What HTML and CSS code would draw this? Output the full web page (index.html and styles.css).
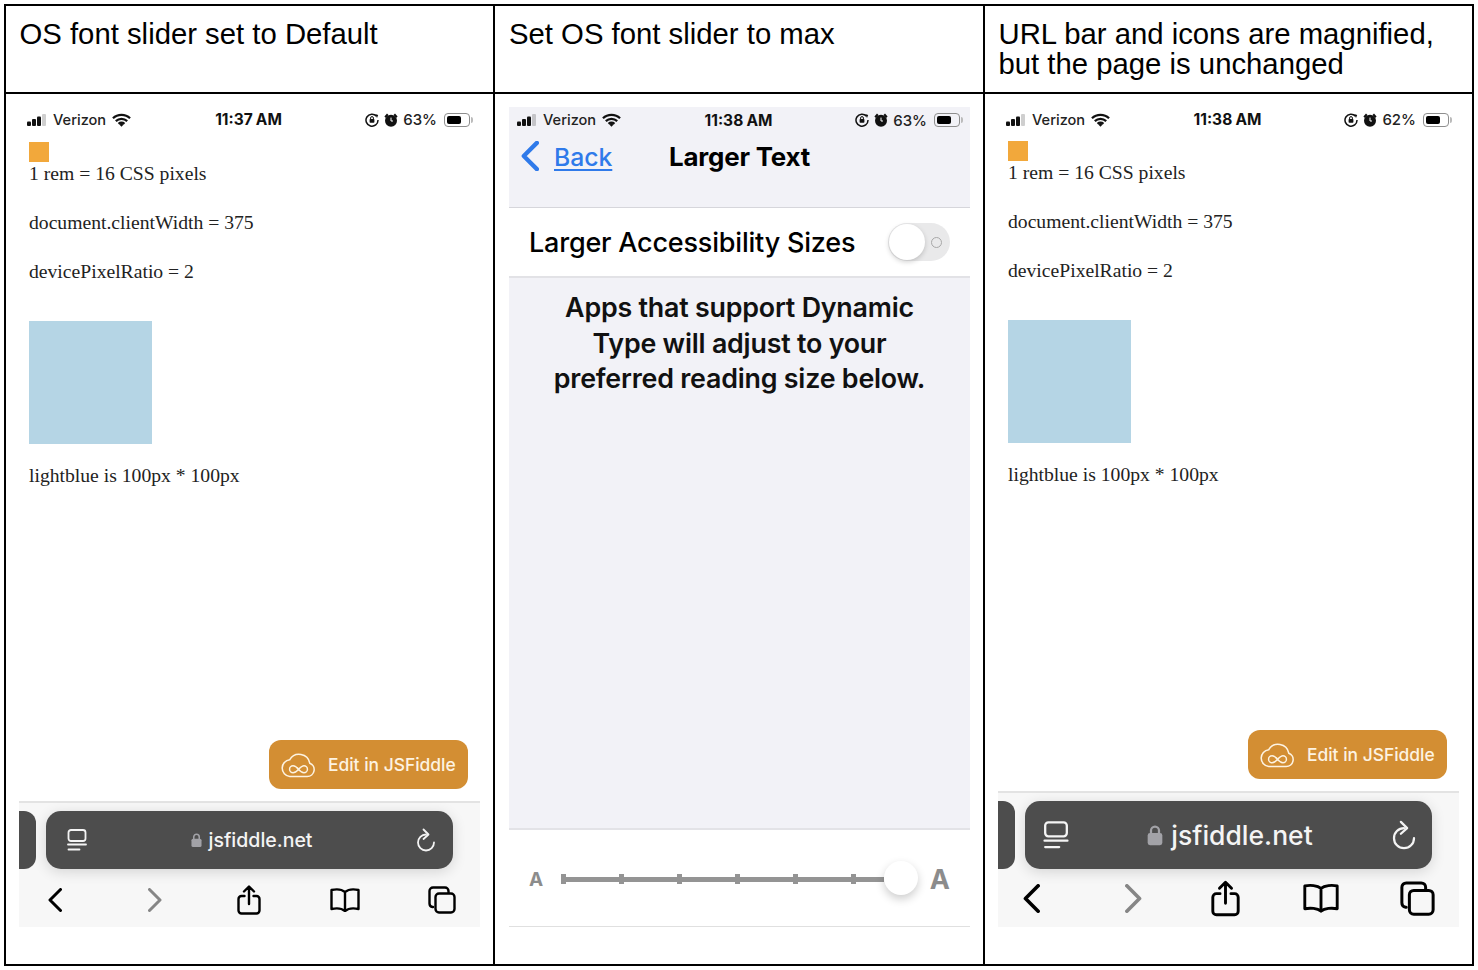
FILE: index.html
```html
<!DOCTYPE html>
<html lang="en">
<head>
<meta charset="utf-8">
<title>OS font slider comparison</title>
<link rel="stylesheet" href="styles.css">
</head>
<body>
<svg class="defs" aria-hidden="true">
  <symbol id="i-signal" viewBox="0 0 20 12"><rect x="0" y="7.500" width="4" height="4.500" rx="1"/><rect x="5" y="5" width="4" height="7" rx="1"/><rect x="10" y="2.500" width="4" height="9.500" rx="1"/><rect x="15" y="0" width="4" height="12" rx="1" opacity=".2"/></symbol>
  <symbol id="i-wifi" viewBox="0 0 20 14"><path d="M1 5.200a13 13 0 0 1 18 0M4 8.200a8.800 8.800 0 0 1 12 0M6.900 11a4.600 4.600 0 0 1 6.200 0" fill="none" stroke="#111" stroke-width="2.400"/><path d="M8 12l2-2 2 2-2 2z"/></symbol>
  <symbol id="i-orient" viewBox="0 0 14 14"><path d="M11.500 3.200A6 6 0 1 0 13 7" fill="none" stroke="#111" stroke-width="1.500"/><path d="M10.200 1l3 1-1.200 3z"/><rect x="4.600" y="6" width="4.800" height="3.800" rx=".7"/><path d="M5.600 6V5a1.400 1.400 0 0 1 2.800 0v1" fill="none" stroke="#111"/></symbol>
  <symbol id="i-alarm" viewBox="0 0 14 14"><circle cx="7" cy="7.800" r="6"/><path d="M.4 3.600L3 .6l1.500 1.300-2.600 3zM13.600 3.600L11 .6 9.500 1.900l2.600 3z"/><path d="M7 4.600v3.400h2" fill="none" stroke="#fff" stroke-width="1"/></symbol>
  <symbol id="i-cloud" viewBox="0 0 36 26"><path d="M9 24.800H27a7.100 7.100 0 0 0 2.600-13.700A11.200 11.200 0 0 0 9 7.500 8.700 8.700 0 0 0 9 24.800z" fill="none" stroke="currentColor" stroke-width="1.600"/><path d="M18 17.600c-1.800-2.300-3.500-3.800-5.600-3.800a3.600 3.600 0 0 0 0 7.200c2.100 0 3.800-1.500 5.600-3.400 1.800-1.900 3.500-3.800 5.600-3.800a3.600 3.600 0 0 1 0 7.200c-2.100 0-3.800-1.500-5.600-3.800z" fill="none" stroke="currentColor" stroke-width="1.500"/></symbol>
  <symbol id="i-reader" viewBox="0 0 20 22"><rect x="1.500" y="1" width="17" height="11" rx="2.500"/><path d="M1 15.500h18M1.500 20.500h11"/></symbol>
  <symbol id="i-lock" viewBox="0 0 12 16"><path d="M3 7V4.700a3 3 0 0 1 6 0V7" fill="none" stroke="currentColor" stroke-width="1.700"/><rect x=".5" y="6.500" width="11" height="9.200" rx="1.800" fill="currentColor"/></symbol>
  <symbol id="i-reload" viewBox="0 0 20 24"><path d="M10 6.500a8 8 0 1 0 8 8"/><path d="M7.500 1.500l5 5-5 4.500"/></symbol>
  <symbol id="i-back" viewBox="0 0 14 24"><path d="M12.500 1.500L2 12l10.500 10.500"/></symbol>
  <symbol id="i-forward" viewBox="0 0 14 24"><path d="M1.500 1.500L12 12 1.500 22.500"/></symbol>
  <symbol id="i-share" viewBox="0 0 24 30"><path d="M7.500 11H4.500a3 3 0 0 0-3 3v11.500a3 3 0 0 0 3 3h15a3 3 0 0 0 3-3V14a3 3 0 0 0-3-3h-3M12 19V2M7 6.500l5-5 5 5"/></symbol>
  <symbol id="i-book" viewBox="0 0 30 24"><path d="M15 4C12 1.500 6 1 1.500 2v19c4.500-1 10.500-.5 13.500 2 3-2.500 9-3 13.500-2V2C24 1 18 1.500 15 4zM15 4v19"/></symbol>
  <symbol id="i-tabs" viewBox="0 0 28 28"><rect x="7.500" y="7.500" width="19" height="19" rx="3.500"/><path d="M5 21H4.500a3.500 3.500 0 0 1-3-3.500V5a3.500 3.500 0 0 1 3.500-3.500h12A3.500 3.500 0 0 1 20.500 5v1.500"/></symbol>
</svg>

<main class="sheet">
  <h2 class="heading heading-tight">OS font slider set to Default</h2>
  <h2 class="heading">Set OS font slider to max</h2>
  <h2 class="heading heading-tight">URL bar and icons are magnified, but the page is unchanged</h2>

  <section class="cell">
    <div class="phone">
      <div class="status">
        <div class="status-left"><svg class="ic-signal"><use href="#i-signal"/></svg><span>Verizon</span><svg class="ic-wifi"><use href="#i-wifi"/></svg></div>
        <b class="status-time">11:37 AM</b>
        <div class="status-right"><svg class="ic-small"><use href="#i-orient"/></svg><svg class="ic-small"><use href="#i-alarm"/></svg><span>63%</span><span class="battery"><i class="battery-level"></i></span></div>
      </div>
      <div class="page">
        <div class="orange"></div>
        <p>1 rem = 16 CSS pixels</p>
        <p>document.clientWidth = 375</p>
        <p>devicePixelRatio = 2</p>
        <div class="blue"></div>
        <p>lightblue is 100px * 100px</p>
      </div>
      <a class="edit"><svg class="ic-cloud"><use href="#i-cloud"/></svg><span>Edit in JSFiddle</span></a>
      <div class="toolbar">
        <div class="url-row">
          <div class="url-stub"></div>
          <div class="url-bar">
            <svg class="ic-reader line light"><use href="#i-reader"/></svg>
            <div class="url-text"><svg class="ic-lock"><use href="#i-lock"/></svg><span>jsfiddle.net</span></div>
            <svg class="ic-reload line light"><use href="#i-reload"/></svg>
          </div>
        </div>
        <div class="nav-row">
          <span class="nav-slot"><svg class="ic-chev ic-prev line"><use href="#i-back"/></svg></span>
          <span class="nav-slot"><svg class="ic-chev ic-next line muted"><use href="#i-forward"/></svg></span>
          <span class="nav-slot"><svg class="ic-share line"><use href="#i-share"/></svg></span>
          <span class="nav-slot"><svg class="ic-book line"><use href="#i-book"/></svg></span>
          <span class="nav-slot"><svg class="ic-tabs line"><use href="#i-tabs"/></svg></span>
        </div>
      </div>
    </div>
  </section>

  <section class="cell cell-wide">
    <div class="phone settings">
      <div class="status">
        <div class="status-left"><svg class="ic-signal"><use href="#i-signal"/></svg><span>Verizon</span><svg class="ic-wifi"><use href="#i-wifi"/></svg></div>
        <b class="status-time">11:38 AM</b>
        <div class="status-right"><svg class="ic-small"><use href="#i-orient"/></svg><svg class="ic-small"><use href="#i-alarm"/></svg><span>63%</span><span class="battery"><i class="battery-level"></i></span></div>
      </div>
      <div class="nav-title">
        <svg class="ic-blue line"><use href="#i-back"/></svg>
        <a class="back">Back</a>
        <b class="title">Larger Text</b>
      </div>
      <div class="toggle-row">
        <span>Larger Accessibility Sizes</span>
        <span class="toggle"><i class="toggle-knob"></i><i class="toggle-dot"></i></span>
      </div>
      <p class="blurb">Apps that support Dynamic Type will adjust to your preferred reading size below.</p>
      <div class="slider-row">
        <b class="a-small">A</b>
        <div class="track"><i></i><i></i><i></i><i></i><i></i><i></i><span class="thumb"></span></div>
        <b class="a-big">A</b>
      </div>
    </div>
  </section>

  <section class="cell">
    <div class="phone magnified">
      <div class="status">
        <div class="status-left"><svg class="ic-signal"><use href="#i-signal"/></svg><span>Verizon</span><svg class="ic-wifi"><use href="#i-wifi"/></svg></div>
        <b class="status-time">11:38 AM</b>
        <div class="status-right"><svg class="ic-small"><use href="#i-orient"/></svg><svg class="ic-small"><use href="#i-alarm"/></svg><span>62%</span><span class="battery"><i class="battery-level"></i></span></div>
      </div>
      <div class="page">
        <div class="orange"></div>
        <p>1 rem = 16 CSS pixels</p>
        <p>document.clientWidth = 375</p>
        <p>devicePixelRatio = 2</p>
        <div class="blue"></div>
        <p>lightblue is 100px * 100px</p>
      </div>
      <a class="edit"><svg class="ic-cloud"><use href="#i-cloud"/></svg><span>Edit in JSFiddle</span></a>
      <div class="toolbar">
        <div class="url-row">
          <div class="url-stub"></div>
          <div class="url-bar">
            <svg class="ic-reader line light"><use href="#i-reader"/></svg>
            <div class="url-text"><svg class="ic-lock"><use href="#i-lock"/></svg><span>jsfiddle.net</span></div>
            <svg class="ic-reload line light"><use href="#i-reload"/></svg>
          </div>
        </div>
        <div class="nav-row">
          <span class="nav-slot"><svg class="ic-chev ic-prev line"><use href="#i-back"/></svg></span>
          <span class="nav-slot"><svg class="ic-chev ic-next line muted"><use href="#i-forward"/></svg></span>
          <span class="nav-slot"><svg class="ic-share line"><use href="#i-share"/></svg></span>
          <span class="nav-slot"><svg class="ic-book line"><use href="#i-book"/></svg></span>
          <span class="nav-slot"><svg class="ic-tabs line"><use href="#i-tabs"/></svg></span>
        </div>
      </div>
    </div>
  </section>
</main>
</body>
</html>
```

FILE: styles.css
```css
* { box-sizing: border-box; }
html, body { margin: 0; background: #fff; }
body { padding: 4px; height: 970px; overflow: hidden; }
.defs { display: none; }
.sheet {
  width: 1470px;
  height: 962px;
  padding: 2px;
  background: #000;
  display: grid;
  grid-template-columns: 487px 488px 487px;
  grid-template-rows: 86px 870px;
  gap: 2px;
}
.heading {
  margin: 0;
  padding: 13px 14px 0;
  background: #fff;
  font: 400 29.300px/30px "Liberation Sans", Arial, sans-serif;
  color: #000;
}
.heading-tight { padding-left: 13.500px; }
.cell { background: #fff; padding: 13px 13px 0; }
.cell-wide { padding-left: 14px; }
.phone {
  width: 461px;
  height: 820px;
  display: flex;
  flex-direction: column;
  font-family: Inter, "Noto Sans", sans-serif;
  color: #000;
}

/* status bar */
.status {
  height: 24px;
  flex: none;
  padding: 1px 10px 0 8px;
  display: grid;
  grid-template-columns: 1fr auto 1fr;
  align-items: center;
  font-size: 14.600px;
  font-weight: 500;
  color: #222;
}
.status-left, .status-right { display: flex; align-items: center; }
.status-right { justify-content: flex-end; }
.status-time { font-size: 15.500px; font-weight: 700; color: #111; word-spacing: -.5px; }
.ic-signal { width: 20px; height: 12px; margin-right: 6px; fill: #111; }
.ic-wifi { width: 19px; height: 14px; margin-left: 6px; fill: #111; }
.ic-small { width: 14px; height: 14px; margin-right: 5px; fill: #111; }
.status-right span:first-of-type { font-size: 15px; margin-right: 7px; }
.battery {
  width: 26px;
  height: 14px;
  padding: 2px;
  border: 1px solid #8e8e8e;
  border-radius: 4px;
  display: block;
  position: relative;
}
.battery::after {
  content: "";
  position: absolute;
  right: -4px;
  top: 3px;
  width: 2px;
  height: 6px;
  background: #bbb;
  border-radius: 0 2px 2px 0;
}
.battery-level { display: block; width: 14px; height: 100%; background: #000; border-radius: 2px; }

/* page */
.page { padding: 11px 0 0 10px; font: 400 19.650px/23px "Liberation Serif", "Times New Roman", serif; color: #222; }
.page p { margin: 0 0 26px; }
.orange { width: 20px; height: 20px; background: #f2a83b; }
.blue { width: 123px; height: 123px; background: #b5d5e5; margin: 38px 0 20px; }

.edit {
  margin: auto 12px 12px auto;
  width: 199px;
  height: 49px;
  flex: none;
  padding-left: 12px;
  border-radius: 12px;
  background: #d38e33;
  color: #fdf3e2;
  display: flex;
  align-items: center;
  gap: 12px;
  font-size: 17.400px;
  font-weight: 500;
}
.ic-cloud { width: 35px; height: 26px; }

/* toolbar */
.toolbar {
  height: 126px;
  flex: none;
  background: #f7f7f7;
  border-top: 2px solid #e3e3e3;
  padding-top: 8px;
  display: flex;
  flex-direction: column;
}
.url-row { display: flex; gap: 10px; height: 58px; flex: none; }
.url-stub { width: 17px; background: #4d4d4d; border-radius: 0 12px 12px 0; }
.url-bar {
  width: 407px;
  background: #4d4d4d;
  border-radius: 15px;
  box-shadow: 0 3px 14px rgba(0, 0, 0, .14);
  padding: 0 17px 0 21px;
  display: flex;
  align-items: center;
  justify-content: space-between;
  color: #f4f4f4;
}
.url-text { display: flex; align-items: center; gap: 7px; font-size: 19.500px; font-weight: 500; }
.ic-lock { width: 11px; height: 16px; color: #a2a2a7; }
.line { fill: none; stroke: #000; stroke-width: 2.400px; stroke-linecap: round; stroke-linejoin: round; }
.light { stroke: #f4f4f4; stroke-width: 1.800px; }
.muted { stroke: #868686; }
.ic-reader { width: 20px; height: 22px; }
.ic-reload { width: 20px; height: 24px; }
.nav-row {
  flex: 1;
  padding: 4px 20px 0 18px;
  display: flex;
  align-items: center;
  justify-content: space-between;
}
.nav-slot { width: 36px; height: 30px; display: flex; align-items: center; justify-content: center; }
.ic-chev { width: 14px; height: 24px; stroke-width: 3px; }
.ic-next { margin-left: 6px; }
.ic-share { width: 24px; height: 30px; }
.ic-book { width: 30px; height: 24px; }
.ic-tabs { width: 28px; height: 28px; }

/* settings */
.settings { background: #f2f2f7; }
.settings .status { height: 25px; }
.nav-title {
  height: 76px;
  flex: none;
  border-bottom: 1px solid #d6d6db;
  position: relative;
  padding: 9px 0 0 12px;
  display: flex;
  align-items: flex-start;
}
.ic-blue { width: 18px; height: 30px; stroke: #2f7aea; stroke-width: 3.400px; }
.back {
  margin-left: 15px;
  color: #2f7aea;
  font-size: 24.700px;
  font-weight: 500;
  line-height: 32px;
  text-decoration: underline;
  text-decoration-thickness: 2px;
  text-underline-offset: 3px;
}
.title {
  position: absolute;
  left: 0;
  right: 0;
  top: 9px;
  text-align: center;
  font-size: 25.900px;
  line-height: 32px;
  letter-spacing: -.2px;
}
.toggle-row {
  height: 70px;
  flex: none;
  background: #fff;
  border-bottom: 2px solid #e2e2e6;
  padding: 0 20px;
  display: flex;
  align-items: center;
  justify-content: space-between;
  font-size: 27px;
  font-weight: 500;
  letter-spacing: -.2px;
}
.toggle {
  width: 62px;
  height: 38px;
  border-radius: 19px;
  background: #e9e9ea;
  position: relative;
  display: block;
}
.toggle-knob {
  position: absolute;
  left: 1px;
  top: 1px;
  width: 36px;
  height: 36px;
  border-radius: 50%;
  background: #fff;
  box-shadow: 0 2px 5px rgba(0, 0, 0, .18);
}
.toggle-dot {
  position: absolute;
  left: 43px;
  top: 14px;
  width: 11px;
  height: 11px;
  border: 1px solid #a8a8a8;
  border-radius: 50%;
}
.blurb {
  flex: 1;
  margin: 0;
  padding: 12px 40px 0;
  text-align: center;
  font-size: 26.800px;
  font-weight: 600;
  line-height: 35.500px;
  letter-spacing: -.2px;
  color: #111;
}
.slider-row {
  height: 99px;
  flex: none;
  background: #fff;
  border-top: 2px solid #e3e3e7;
  border-bottom: 1px solid #e0e0e0;
  padding: 2px 20px 0;
  display: flex;
  align-items: center;
  color: #8c8c8c;
}
.a-small { width: 14px; font-size: 19px; text-align: center; }
.a-big { margin-left: auto; font-size: 27px; font-weight: 700; }
.track {
  margin-left: 18px;
  width: 323px;
  height: 5px;
  background: #949494;
  display: flex;
  align-items: center;
  gap: 53px;
  position: relative;
}
.track i { width: 5px; height: 10px; background: #949494; flex: none; }
.thumb {
  position: absolute;
  left: 323px;
  top: -16px;
  width: 34px;
  height: 34px;
  border-radius: 50%;
  background: #fff;
  box-shadow: 0 4px 10px rgba(0, 0, 0, .2);
}

/* magnified variant */
.magnified .page { padding-top: 10px; }
.magnified .toolbar { height: 136px; }
.magnified .url-row { height: 68px; }
.magnified .url-text { font-size: 26.500px; gap: 8px; }
.magnified .ic-lock { width: 16px; height: 22px; }
.magnified .url-bar { padding: 0 15px 0 18px; }
.magnified .ic-reader { width: 26px; height: 28px; }
.magnified .ic-reload { width: 26px; height: 30px; }
.magnified .nav-row { padding: 0 24px 0 17px; }
.magnified .ic-chev { width: 17px; height: 29px; }
.magnified .ic-prev { margin-left: -4px; }
.magnified .ic-next { margin-left: 8px; }
.magnified .ic-share { width: 29px; height: 37px; }
.magnified .ic-book { width: 37px; height: 30px; }
.magnified .ic-tabs { width: 35px; height: 35px; }
.magnified .nav-slot { height: 37px; }
```
